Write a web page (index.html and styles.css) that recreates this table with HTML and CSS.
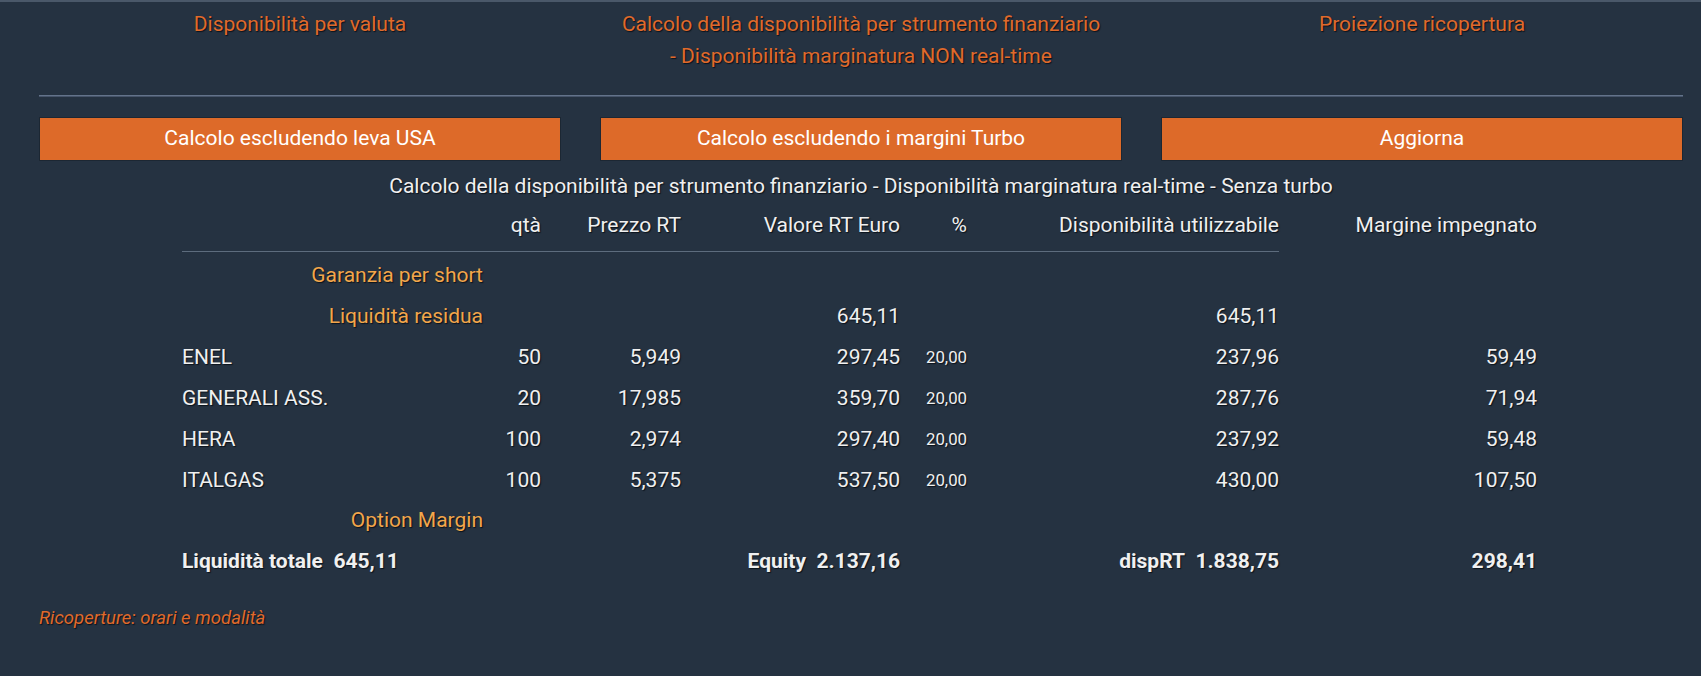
FILE: index.html
```html
<!DOCTYPE html>
<html lang="it">
<head>
<meta charset="utf-8">
<title>Disponibilità</title>
<link rel="stylesheet" href="styles.css">
</head>
<body>
<div class="page">
  <nav class="links">
    <a class="link">Disponibilità per valuta</a>
    <a class="link">Calcolo della disponibilità per strumento finanziario<br>- Disponibilità marginatura NON real-time</a>
    <a class="link">Proiezione ricopertura</a>
  </nav>
  <div class="rule"></div>
  <div class="buttons">
    <button class="btn">Calcolo escludendo leva USA</button>
    <button class="btn">Calcolo escludendo i margini Turbo</button>
    <button class="btn">Aggiorna</button>
  </div>
  <div class="subtitle">Calcolo della disponibilità per strumento finanziario - Disponibilità marginatura real-time - Senza turbo</div>
  <table class="grid">
    <colgroup>
      <col class="c-name"><col class="c-qta"><col class="c-prezzo"><col class="c-valore"><col class="c-pct"><col class="c-disp"><col class="c-marg">
    </colgroup>
    <thead>
      <tr>
        <th class="ul"></th>
        <th class="ul">qtà</th>
        <th class="ul">Prezzo RT</th>
        <th class="ul">Valore RT Euro</th>
        <th class="ul">%</th>
        <th class="ul">Disponibilità utilizzabile</th>
        <th>Margine impegnato</th>
      </tr>
    </thead>
    <tbody>
      <tr class="first">
        <td class="label">Garanzia per short</td><td></td><td></td><td></td><td></td><td></td><td></td>
      </tr>
      <tr>
        <td class="label">Liquidità residua</td><td></td><td></td><td>645,11</td><td></td><td>645,11</td><td></td>
      </tr>
      <tr>
        <td class="name">ENEL</td><td>50</td><td>5,949</td><td>297,45</td><td class="pct">20,00</td><td>237,96</td><td>59,49</td>
      </tr>
      <tr>
        <td class="name">GENERALI ASS.</td><td>20</td><td>17,985</td><td>359,70</td><td class="pct">20,00</td><td>287,76</td><td>71,94</td>
      </tr>
      <tr>
        <td class="name">HERA</td><td>100</td><td>2,974</td><td>297,40</td><td class="pct">20,00</td><td>237,92</td><td>59,48</td>
      </tr>
      <tr>
        <td class="name">ITALGAS</td><td>100</td><td>5,375</td><td>537,50</td><td class="pct">20,00</td><td>430,00</td><td>107,50</td>
      </tr>
      <tr>
        <td class="label">Option Margin</td><td></td><td></td><td></td><td></td><td></td><td></td>
      </tr>
      <tr class="total">
        <td class="name">Liquidità totale&nbsp;&nbsp;645,11</td><td></td><td></td><td>Equity&nbsp;&nbsp;2.137,16</td><td></td><td>dispRT&nbsp;&nbsp;1.838,75</td><td>298,41</td>
      </tr>
    </tbody>
  </table>
  <a class="note">Ricoperture: orari e modalità</a>
</div>
</body>
</html>
```

FILE: styles.css
```css
html, body {
  margin: 0;
  padding: 0;
}
body {
  background: #253241;
  border-top: 2px solid #4a5869;
  min-height: 674px;
  font-family: Roboto, "Liberation Sans", sans-serif;
  font-size: 21px;
  line-height: 1.5;
  color: #f0f0f0;
  text-shadow: 1px 1px 1px #0b121a;
}
.page {
  width: 1644px;
  margin-left: 39px;
}
.links {
  display: grid;
  grid-template-columns: 1fr 1fr 1fr;
  column-gap: 39px;
  padding-top: 7px;
  text-align: center;
}
.link {
  color: #e06a2b;
  text-decoration: none;
}
.rule {
  margin-top: 23px;
  border-top: 1px solid #63738a;
  border-bottom: 1px solid #46546a;
}
.buttons {
  display: grid;
  grid-template-columns: 1fr 1fr 1fr;
  column-gap: 39px;
  margin-top: 20px;
}
.btn {
  font: inherit;
  height: 44px;
  padding: 0;
  background: #dd6a29;
  color: #fff;
  border: 1px solid #1c2733;
  text-shadow: none;
  cursor: pointer;
}
.subtitle {
  margin-top: 10px;
  text-align: center;
}
.grid {
  table-layout: fixed;
  width: 1355px;
  margin: 0 0 0 143px;
  border-collapse: collapse;
}
.c-name { width: 301px; }
.c-qta { width: 58px; }
.c-prezzo { width: 140px; }
.c-valore { width: 219px; }
.c-pct { width: 67px; }
.c-disp { width: 312px; }
.c-marg { width: 258px; }
.grid th {
  font-weight: normal;
  text-align: right;
  padding: 7.5px 0 9px;
  white-space: nowrap;
}
.grid th.ul {
  border-bottom: 1px solid #5d6c7d;
}
.grid td {
  text-align: right;
  padding: 4.7px 0;
  white-space: nowrap;
}
.grid tr.first td {
  padding-top: 8.7px;
}
.grid td.name {
  text-align: left;
}
.grid td.label {
  color: #f2a64b;
}
.grid td.pct {
  font-size: 16.8px;
  vertical-align: middle;
}
.grid tr.total td {
  font-weight: bold;
}
.note {
  display: block;
  margin-top: 22px;
  font-size: 18.5px;
  font-style: italic;
  color: #e06a2b;
}
```
